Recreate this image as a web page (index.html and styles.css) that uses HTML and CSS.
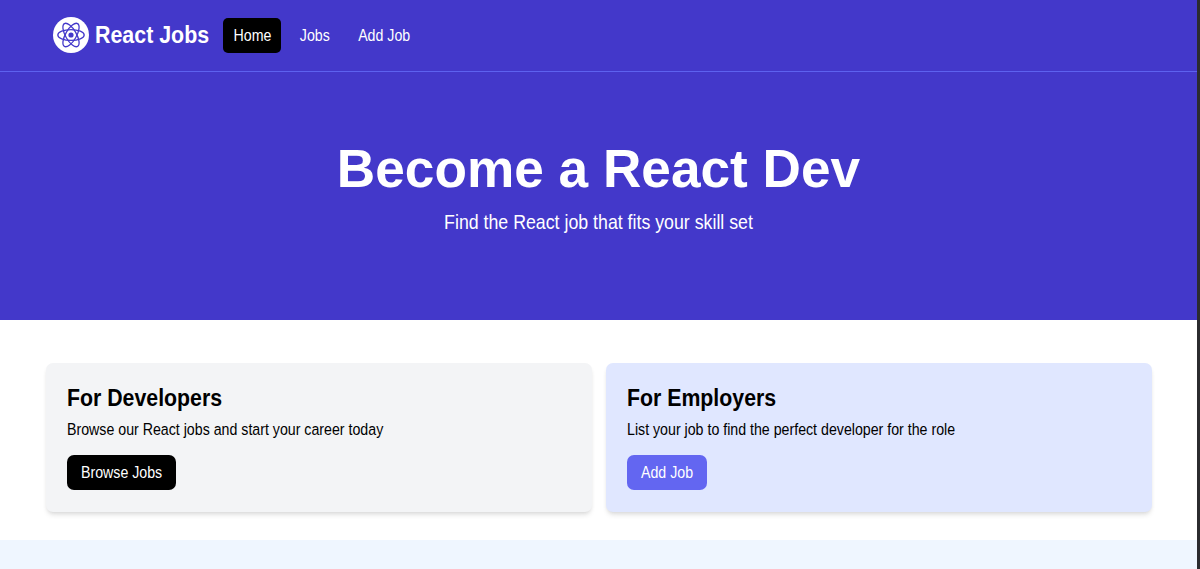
FILE: index.html
```html
<!DOCTYPE html>
<html lang="en">
<head>
    <meta charset="UTF-8">
    <meta name="viewport" content="width=device-width, initial-scale=1.0">
    <title>React Jobs</title>
    <link rel="stylesheet" href="styles.css">
</head>
<body>
    <nav class="navbar">
        <a class="logo" href="#">
            <svg class="logo-icon" viewBox="0 0 36 36">
                <circle cx="18" cy="18" r="18" fill="#ffffff"/>
                <g fill="none" stroke="#4338ca" stroke-width="1.3">
                    <ellipse cx="18" cy="18" rx="13.2" ry="5.4"/>
                    <ellipse cx="18" cy="18" rx="13.2" ry="5.4" transform="rotate(60 18 18)"/>
                    <ellipse cx="18" cy="18" rx="13.2" ry="5.4" transform="rotate(120 18 18)"/>
                </g>
                <circle cx="18" cy="18" r="4" fill="#ffffff"/>
                <circle cx="18" cy="18" r="2.6" fill="#4338ca"/>
            </svg>
            <span>React Jobs</span>
        </a>
        <div class="nav-links">
            <a class="active" href="#"><span>Home</span></a>
            <a href="#"><span>Jobs</span></a>
            <a href="#"><span>Add Job</span></a>
        </div>
    </nav>

    <!-- Hero -->
    <section class="hero">
        <h1>Become a React Dev</h1>
        <p>Find the React job that fits your skill set</p>
    </section>

    <!-- Developers and Employers -->
    <section class="cards">
        <div class="card">
            <h2>For Developers</h2>
            <p>Browse our React jobs and start your career today</p>
            <a class="btn" href="#"><span>Browse Jobs</span></a>
        </div>
        <div class="card card-employers">
            <h2>For Employers</h2>
            <p>List your job to find the perfect developer for the role</p>
            <a class="btn" href="#"><span>Add Job</span></a>
        </div>
    </section>

    <section class="browse"></section>
</body>
</html>
```
FILE: styles.css
```css
* {margin: 0; padding: 0; box-sizing: border-box;}
html {height: 100%; overflow: hidden;}
body {height: 100%; display: flex; flex-direction: column; background-color: #ffffff; color: #000000; border-right: 3px solid #2b2b2f; font-family: 'Liberation Sans', Arial, sans-serif; font-size: 14.2px; line-height: 21px;}
a {color: inherit; text-decoration: none;}

/* slightly taller letters */
.nav-links span, .btn span, .card p, .hero p {display: block; transform: translateY(0.4px) scaleY(1.1);}
.logo span, .card h2 {transform: scaleY(1.08);}

.navbar {height: 72px; flex-shrink: 0; padding: 0 53px; display: flex; align-items: center; background-color: #4338ca; border-bottom: 1px solid #5d62ef; color: #ffffff;}
.logo {display: flex; align-items: center; gap: 6px; margin-right: 14px; font-size: 21.4px; font-weight: 700;}
.logo-icon {width: 36px; height: 36px; display: block; margin-top: -1px;}
.nav-links {display: flex; gap: 8px;}
.nav-links a {padding: 7px 10px 7px 10.4px; border-radius: 5px;}
.nav-links a.active {background-color: #000000;}

.hero {height: 248px; flex-shrink: 0; padding-top: 70px; background-color: #4338ca; color: #ffffff; text-align: center;}
.hero h1 {font-size: 53.2px; line-height: 54px;}
.hero p {margin-top: 14px; font-size: 17.75px; line-height: 25px;}

.cards {height: 220px; flex-shrink: 0; padding: 43px 45px 28px 46px; display: grid; grid-template-columns: 1fr 1fr; gap: 14px;}
.card {padding: 21px; background-color: #f3f4f6; border-radius: 7px; box-shadow: 0 4px 5px -1px rgba(0, 0, 0, 0.1), 0 2px 4px -2px rgba(0, 0, 0, 0.1);}
.card h2 {font-size: 21.3px; line-height: 28px;}
.card p {margin: 7px 0 15px;}
.card .btn {display: inline-block; padding: 7px 14px; background-color: #000000; color: #ffffff; border-radius: 7px;}
.card-employers {background-color: #e0e7ff;}
.card-employers .btn {background-color: #6366f1;}

.browse {flex: 1; background-color: #eff6ff;}
```
